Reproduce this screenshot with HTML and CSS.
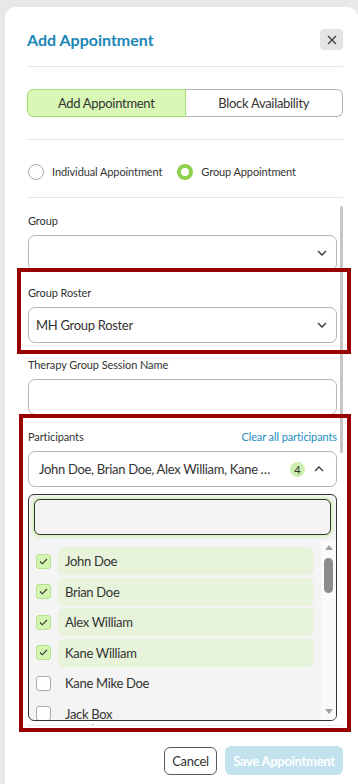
FILE: index.html
```html
<!DOCTYPE html>
<html lang="en">
<head>
    <meta charset="UTF-8">
    <meta name="viewport" content="width=device-width, initial-scale=1.0">
    <title>Add Appointment</title>
    <link rel="stylesheet" href="styles.css">
</head>
<body>
    <div class="modal">
        <div class="modal-header">
            <h2 class="modal-title">Add Appointment</h2>
            <button class="close-btn" aria-label="Close">
                <svg width="10" height="10" viewBox="0 0 10 10"><path d="M1 1l8 8M9 1l-8 8" stroke="#444" stroke-width="1.4" fill="none"/></svg>
            </button>
        </div>

        <div class="section toggle-section">
            <div class="toggle">
                <button class="toggle-btn active">Add Appointment</button>
                <button class="toggle-btn">Block Availability</button>
            </div>
        </div>

        <div class="section radio-section">
            <label class="radio"><span class="radio-circle"></span>Individual Appointment</label>
            <label class="radio checked"><span class="radio-circle"></span>Group Appointment</label>
        </div>

        <div class="form-area">
            <div class="form-scroll">
                <div class="field">
                    <span class="field-label">Group</span>
                    <div class="select">
                        <svg class="chevron" width="10" height="6" viewBox="0 0 10 6"><path d="M1 1l4 4 4-4" fill="none" stroke="#333" stroke-width="1.3"/></svg>
                    </div>
                </div>
                <div class="field">
                    <span class="field-label">Group Roster</span>
                    <div class="select">
                        <span class="select-value">MH Group Roster</span>
                        <svg class="chevron" width="10" height="6" viewBox="0 0 10 6"><path d="M1 1l4 4 4-4" fill="none" stroke="#333" stroke-width="1.3"/></svg>
                    </div>
                </div>
                <div class="field">
                    <span class="field-label">Therapy Group Session Name</span>
                    <div class="select"></div>
                </div>
                <div class="field open">
                    <div class="label-row">
                        <span class="field-label">Participants</span>
                        <a class="link" href="#">Clear all participants</a>
                    </div>
                    <div class="select multi">
                        <span class="multi-value">John Doe, Brian Doe, Alex William, Kane William</span>
                        <span class="count-badge">4</span>
                        <svg class="chevron up" width="10" height="6" viewBox="0 0 10 6"><path d="M1 5l4-4 4 4" fill="none" stroke="#333" stroke-width="1.3"/></svg>
                    </div>
                    <div class="dropdown">
                        <div class="search"></div>
                        <div class="list-wrap">
                            <div class="list">
                                <div class="option selected">
                                    <span class="checkbox"><svg width="9" height="7" viewBox="0 0 9 7"><path d="M1 3.5l2.3 2.3L8 1" fill="none" stroke="#333" stroke-width="1.1"/></svg></span>
                                    <span class="option-label">John Doe</span>
                                </div>
                                <div class="option selected">
                                    <span class="checkbox"><svg width="9" height="7" viewBox="0 0 9 7"><path d="M1 3.5l2.3 2.3L8 1" fill="none" stroke="#333" stroke-width="1.1"/></svg></span>
                                    <span class="option-label">Brian Doe</span>
                                </div>
                                <div class="option selected">
                                    <span class="checkbox"><svg width="9" height="7" viewBox="0 0 9 7"><path d="M1 3.5l2.3 2.3L8 1" fill="none" stroke="#333" stroke-width="1.1"/></svg></span>
                                    <span class="option-label">Alex William</span>
                                </div>
                                <div class="option selected">
                                    <span class="checkbox"><svg width="9" height="7" viewBox="0 0 9 7"><path d="M1 3.5l2.3 2.3L8 1" fill="none" stroke="#333" stroke-width="1.1"/></svg></span>
                                    <span class="option-label">Kane William</span>
                                </div>
                                <div class="option">
                                    <span class="checkbox"></span>
                                    <span class="option-label">Kane Mike Doe</span>
                                </div>
                                <div class="option">
                                    <span class="checkbox"></span>
                                    <span class="option-label">Jack Box</span>
                                </div>
                            </div>
                            <div class="list-scroll">
                                <span class="arrow-up"></span>
                                <span class="list-thumb"></span>
                                <span class="arrow-down"></span>
                            </div>
                        </div>
                    </div>
                </div>
                <div class="field">
                    <span class="field-label">Contact Type*</span>
                    <div class="select"></div>
                </div>
                <div class="field">
                    <span class="field-label">Location</span>
                    <div class="select"></div>
                </div>
            </div>
            <div class="scroll-track"><div class="scroll-thumb"></div></div>
        </div>

        <div class="modal-footer">
            <button class="btn-cancel">Cancel</button>
            <button class="btn-save" disabled>Save Appointment</button>
        </div>
    </div>

    <div class="callout callout-roster"></div>
    <div class="callout callout-participants"></div>
</body>
</html>
```

FILE: styles.css
```css
body {
    margin: 0;
    height: 100vh;
    overflow: hidden;
    background-color: #e8e8e8;
    font-family: Lato, "Open Sans", Arial, sans-serif;
    color: #333;
}
button {
    font-family: inherit;
    cursor: pointer;
}
.modal {
    margin: 7px 0 0 5px;
    width: 353px;
    height: 800px;
    box-sizing: border-box;
    padding: 22px 15px 0 22px;
    background-color: #fff;
    border-radius: 11px 11px 0 0;
}
.modal-header {
    display: flex;
    align-items: center;
    justify-content: space-between;
    padding-bottom: 16px;
    border-bottom: 1px solid #e6e6e6;
}
.modal-title {
    margin: 0;
    font-size: 16px;
    line-height: 21px;
    font-weight: 700;
    color: #1a86b5;
}
.close-btn {
    width: 23px;
    height: 21px;
    padding: 0;
    border: none;
    border-radius: 4px;
    background-color: #e4e4e4;
    display: flex;
    align-items: center;
    justify-content: center;
}
.section {
    border-bottom: 1px solid #e6e6e6;
}
.toggle-section {
    padding: 22px 0;
}
.toggle {
    display: flex;
    height: 28px;
}
.toggle-btn {
    flex: 1;
    font-size: 13px;
    letter-spacing: -0.3px;
    color: #333;
    background-color: #fff;
    border: 1px solid #b4b4b4;
    border-left: none;
    border-radius: 0 6px 6px 0;
}
.toggle-btn.active {
    background-color: #d9f8b6;
    border: 1px solid #a8db7e;
    border-radius: 6px 0 0 6px;
}
.radio-section {
    display: flex;
    align-items: center;
    gap: 15px;
    padding: 24px 0 17px 1px;
}
.radio {
    display: flex;
    align-items: center;
    gap: 8px;
    font-size: 11px;
    letter-spacing: -0.1px;
    line-height: 16px;
}
.radio-circle {
    width: 16px;
    height: 16px;
    box-sizing: border-box;
    border: 1px solid #a9a9a9;
    border-radius: 50%;
    background-color: #fff;
}
.radio.checked .radio-circle {
    border: 4.5px solid #8ed14e;
}
.form-area {
    display: flex;
    gap: 3px;
    height: 527px;
    padding-left: 1px;
}
.form-scroll {
    flex: 1;
    min-width: 0;
    overflow: hidden;
    padding-top: 15px;
}
.scroll-track {
    width: 3px;
    padding-top: 8px;
}
.scroll-thumb {
    height: 247px;
    background-color: #c6c6c6;
    border-radius: 2px;
}
.field {
    margin-bottom: 14px;
}
.field.open {
    margin-bottom: 0;
}
.field-label {
    display: block;
    font-size: 11px;
    letter-spacing: -0.1px;
    line-height: 15px;
    margin-bottom: 7px;
}
.label-row {
    display: flex;
    justify-content: space-between;
}
.link {
    font-size: 11px;
    letter-spacing: -0.1px;
    line-height: 15px;
    color: #1b8ec2;
    text-decoration: none;
}
.select {
    display: flex;
    align-items: center;
    height: 36px;
    box-sizing: border-box;
    padding: 0 9px 0 7px;
    border: 1px solid #b5b5b5;
    border-radius: 7px;
    font-size: 13px;
    letter-spacing: -0.3px;
}
.chevron {
    margin-left: auto;
    flex: none;
}
.select.multi {
    padding: 0 12px 0 10px;
}
.multi-value {
    flex: 1;
    min-width: 0;
    white-space: nowrap;
    overflow: hidden;
    text-overflow: ellipsis;
}
.count-badge {
    flex: none;
    width: 15px;
    height: 15px;
    margin-left: 14px;
    border-radius: 50%;
    background-color: #cdeeb1;
    font-size: 11px;
    letter-spacing: 0;
    display: flex;
    align-items: center;
    justify-content: center;
}
.chevron.up {
    margin-left: 9px;
}
.dropdown {
    display: flex;
    flex-direction: column;
    height: 227px;
    box-sizing: border-box;
    margin-top: 7px;
    padding: 4px 5px 0;
    border: 1px solid #333;
    border-radius: 6px;
    background-color: #f4f4f4;
    overflow: hidden;
}
.search {
    flex: none;
    height: 36px;
    box-sizing: border-box;
    border: 1px solid #333;
    border-radius: 6px;
    background-color: #f3f3f3;
    box-shadow: 0 0 3px 2px #d6f2bb;
}
.list-wrap {
    display: flex;
    flex: 1;
    min-height: 0;
    margin: 6px -5px 0 0;
}
.list {
    flex: 1;
    overflow: hidden;
    padding: 6px 0 0 2px;
}
.option {
    display: flex;
    align-items: center;
    gap: 7px;
    margin-bottom: 2.5px;
}
.checkbox {
    flex: none;
    width: 15px;
    height: 15px;
    box-sizing: border-box;
    border: 1px solid #ababab;
    border-radius: 3px;
    background-color: #fff;
    display: flex;
    align-items: center;
    justify-content: center;
}
.option.selected .checkbox {
    background-color: #d4f6b2;
    border-color: #b4e28e;
}
.option-label {
    flex: 1;
    height: 28px;
    margin-right: 7px;
    padding-left: 7px;
    display: flex;
    align-items: center;
    border-radius: 6px;
    font-size: 13px;
    letter-spacing: -0.3px;
}
.option.selected .option-label {
    background-color: #e8f3dc;
}
.list-scroll {
    flex: none;
    width: 15px;
    background-color: #fafafa;
    display: flex;
    flex-direction: column;
    align-items: center;
}
.arrow-up {
    margin-top: 4px;
    border-left: 4.5px solid transparent;
    border-right: 4.5px solid transparent;
    border-bottom: 5px solid #a3a3a3;
}
.list-thumb {
    width: 9px;
    height: 35px;
    margin-top: 8px;
    border-radius: 5px;
    background-color: #8c8c8c;
}
.arrow-down {
    margin: auto 0 6px;
    border-left: 4.5px solid transparent;
    border-right: 4.5px solid transparent;
    border-top: 5px solid #a3a3a3;
}
.modal-footer {
    display: flex;
    justify-content: flex-end;
    align-items: center;
    gap: 8px;
    padding-top: 20px;
    border-top: 1px solid #ececec;
}
.btn-cancel {
    width: 53px;
    height: 28px;
    padding: 0;
    font-size: 13px;
    letter-spacing: -0.3px;
    color: #333;
    background-color: #fff;
    border: 1px solid #5a5a5a;
    border-radius: 6px;
}
.btn-save {
    width: 118px;
    height: 29px;
    padding: 0;
    font-size: 13px;
    letter-spacing: -0.3px;
    font-weight: 700;
    color: #fff;
    background-color: #c2e2ee;
    border: none;
    border-radius: 6px;
}
.callout {
    position: absolute;
    box-sizing: border-box;
    border: 4px solid #990000;
    pointer-events: none;
}
.callout-roster {
    left: 17px;
    top: 268px;
    width: 334px;
    height: 86px;
}
.callout-participants {
    left: 19px;
    top: 414px;
    width: 332px;
    height: 318px;
}
```
